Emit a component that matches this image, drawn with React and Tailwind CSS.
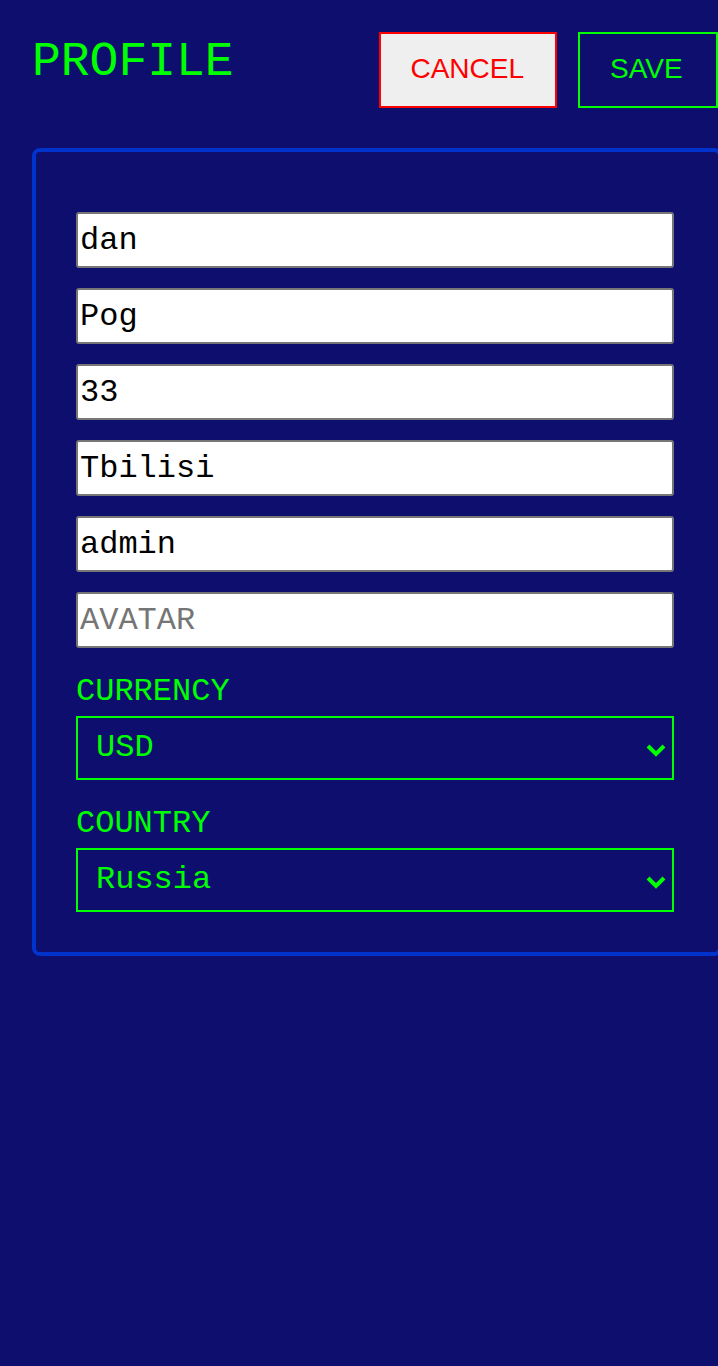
import React from "react";

const mono = { fontFamily: '"Liberation Mono", monospace' };

function Chevron() {
  return (
    <svg className="pointer-events-none absolute right-[5px] top-[24px]" width="22" height="16" viewBox="0 0 22 16">
      <path d="M3 4 L11 12 L19 4" fill="none" stroke="#00ff00" strokeWidth="4" />
    </svg>
  );
}

function Field({ value, placeholder }) {
  return (
    <input
      defaultValue={value}
      placeholder={placeholder}
      className="h-[56px] w-full rounded-[3px] border-2 border-[#767676] bg-white px-[2px] text-[32px] text-black placeholder:text-[#757575] outline-none font-['Liberation_Mono',monospace]"
    />
  );
}

function SelectGroup({ label, value }) {
  return (
    <div className="flex flex-col gap-[6px]">
      <label className="pt-[6px] text-[32px] leading-[36px] text-[#00ff00] font-['Liberation_Mono',monospace]">{label}</label>
      <div className="relative h-[64px] border-2 border-[#00ff00] flex items-center pl-[18px]">
        <span className="text-[32px] text-[#00ff00] font-['Liberation_Mono',monospace]">{value}</span>
        <Chevron />
      </div>
    </div>
  );
}

export default function App() {
  return (
    <div className="min-h-[1366px] w-[718px] overflow-hidden bg-[#0e0e6f] pl-[32px] pt-[32px]" style={mono}>
      <div className="flex items-start justify-between">
        <h1 className="mt-[2px] text-[48px] leading-[56px] text-[#00ff00] font-['Liberation_Mono',monospace]">PROFILE</h1>
        <div className="flex gap-[21px]">
          <button className="h-[76px] border-2 border-[#ff0000] bg-[#efefef] pl-[29px] pr-[31px] pb-[2px] text-[28px] text-[#ff0000] font-['Liberation_Sans',sans-serif]">CANCEL</button>
          <button className="h-[76px] w-[140px] shrink-0 border-2 border-[#00ff00] bg-transparent pl-[30px] pb-[2px] text-left text-[28px] text-[#00ff00] font-['Liberation_Sans',sans-serif]">SAVE</button>
        </div>
      </div>
      <div className="mt-[40px] w-[690px] rounded-[8px] border-4 border-[#0033cc] pl-[40px] pr-[44px] pt-[60px] pb-[40px]">
        <div className="flex w-[598px] flex-col gap-5">
          <Field value="dan" />
          <Field value="Pog" />
          <Field value="33" />
          <Field value="Tbilisi" />
          <Field value="admin" />
          <Field placeholder="AVATAR" />
          <SelectGroup label="CURRENCY" value="USD" />
          <SelectGroup label="COUNTRY" value="Russia" />
        </div>
      </div>
    </div>
  );
}
